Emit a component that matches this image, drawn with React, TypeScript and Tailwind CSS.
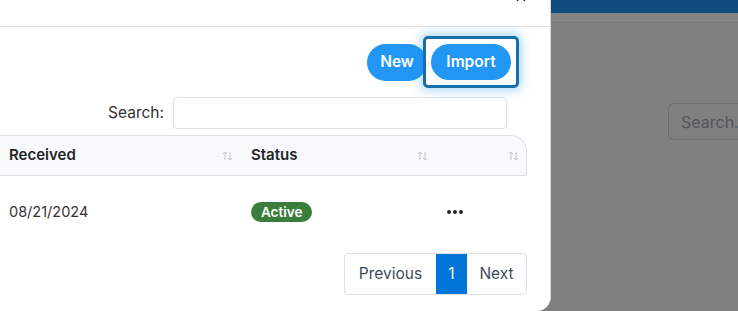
import { X } from 'lucide-react';

function SortIcon() {
  return (
    <svg width="11" height="10" viewBox="0 0 11 10" className="shrink-0">
      <path d="M3 9V1M1 3l2-2 2 2" stroke="#c3c7cc" strokeWidth="1" fill="none" />
      <path d="M8 1v8M6 7l2 2 2-2" stroke="#c3c7cc" strokeWidth="1" fill="none" />
    </svg>
  );
}

function Modal() {
  return (
    <div className="w-[551px] h-[311px] shrink-0 bg-white rounded-br-[14px] border-r border-[#d5d8dc] flex flex-col overflow-hidden">
      {/* header, scrolled so only the tail of the close button shows */}
      <div className="h-[27px] shrink-0 border-b border-[#dde1e5] relative">
        <X className="absolute right-[22px] -top-[10px] text-[#333]" size={14} strokeWidth={2.5} />
      </div>

      <div className="w-[527px] flex flex-col">
        <div className="flex justify-end items-center pt-[9px] pr-[8px]">
          <button className="h-[37px] w-[60px] rounded-full bg-[#2196f3] text-white font-semibold text-[15.5px]">
            New
          </button>
          <div className="relative -ml-[4px] rounded-[5px] border-[3px] border-[#1a6ea8] bg-white p-[5px] shadow-[0_0_10px_3px_rgba(33,150,243,0.35)]">
            <button className="h-[36px] w-[80px] rounded-full bg-[#2196f3] text-white font-semibold text-[15.5px] block">
              Import
            </button>
          </div>
        </div>

        <div className="flex justify-end items-center gap-[9px] mt-[9px] pr-[20px]">
          <span className="text-[15.5px] text-[#333]">Search:</span>
          <input className="w-[334px] h-[32px] border border-[#dde1e5] rounded-[4px] outline-none" />
        </div>

        <div className="mt-[6px] grid grid-cols-[242px_190px_95px]">
          <div className="h-[41px] bg-[#f8f9fa] border-t border-b border-[#dde1e5] flex items-center justify-between pl-[9px] pr-[9px]">
            <span className="font-semibold text-[15px] text-[#212529]">Received</span>
            <SortIcon />
          </div>
          <div className="h-[41px] bg-[#f8f9fa] border-t border-b border-[#dde1e5] flex items-center justify-between pl-[9px] pr-[4px]">
            <span className="font-semibold text-[15px] text-[#212529]">Status</span>
            <SortIcon />
          </div>
          <div className="h-[41px] bg-[#f8f9fa] border-t border-b border-r border-[#dde1e5] rounded-tr-[16px] flex items-center justify-end pr-[7px]">
            <SortIcon />
          </div>

          <div className="h-[72px] flex items-center pl-[9px] text-[14.5px] text-[#333]">08/21/2024</div>
          <div className="h-[72px] flex items-center pl-[9px]">
            <span className="h-[20px] px-[10px] rounded-full bg-[#3b7e3b] text-white text-[13.5px] font-semibold flex items-center">
              Active
            </span>
          </div>
          <div className="h-[72px] flex items-center pl-[15px]">
            <svg width="16" height="4" viewBox="0 0 16 4">
              <circle cx="2" cy="2" r="2" fill="#212529" />
              <circle cx="8" cy="2" r="2" fill="#212529" />
              <circle cx="14" cy="2" r="2" fill="#212529" />
            </svg>
          </div>
        </div>

        <div className="flex justify-end mt-[5px]">
          <div className="flex h-[42px] border border-[#dde1e5] rounded-[4px] text-[15.5px] text-[#3d4a5c]">
            <div className="w-[91px] flex items-center justify-center">Previous</div>
            <div className="w-[31px] flex items-center justify-center bg-[#0275d8] text-white">1</div>
            <div className="w-[59px] flex items-center justify-center">Next</div>
          </div>
        </div>
      </div>
    </div>
  );
}

export default function App() {
  return (
    <div className="w-[738px] h-[311px] flex bg-[#808080] overflow-hidden font-['Inter',sans-serif]">
      <Modal />
      <div className="flex-1 flex flex-col">
        <div className="h-[13px] bg-[#0f4c7e]" />
        <div className="h-[10px] bg-[#838383] border-b border-[#777]" />
        <div className="flex justify-end mt-[80px]">
          <div className="w-[70px] h-[37px] border border-[#6e6e6e] border-r-0 rounded-l-[6px] flex items-center pl-[12px] text-[16px] text-[#50565d] overflow-hidden whitespace-nowrap">
            Search...
          </div>
        </div>
      </div>
    </div>
  );
}
